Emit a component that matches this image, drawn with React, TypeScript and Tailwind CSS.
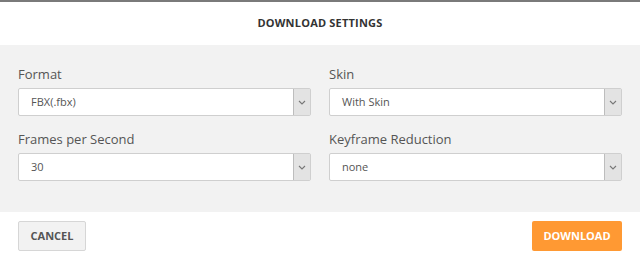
import React from 'react';

const font = { fontFamily: '"Open Sans", "Noto Sans", sans-serif' };

const fields = [
  { label: 'Format', value: 'FBX(.fbx)' },
  { label: 'Skin', value: 'With Skin' },
  { label: 'Frames per Second', value: '30' },
  { label: 'Keyframe Reduction', value: 'none' },
];

function SelectBox({ label, value }: { label: string; value: string }) {
  return (
    <div className="flex flex-col">
      <label className="text-[13px] leading-[18px] text-[#555] mb-[5px]">{label}</label>
      <div className="flex h-[28px] bg-white border border-[#cfcfcf] rounded-[2px]">
        <span className="flex-1 pl-[12px] text-[11px] leading-[26px] text-[#555]">{value}</span>
        <span className="w-[17px] flex items-center justify-center bg-[#e3e3e3] border-l border-[#bdbdbd]">
          <svg width="8" height="5" viewBox="0 0 8 5" fill="none">
            <path d="M1 1l3 3 3-3" stroke="#777" strokeWidth="1.1" />
          </svg>
        </span>
      </div>
    </div>
  );
}

export default function App() {
  return (
    <div className="w-[640px] h-[259px] bg-white flex flex-col" style={font}>
      <div className="h-[2px] bg-[#7a7a7a]" />
      <div className="h-[43px] flex items-center justify-center">
        <h2 className="text-[11px] font-bold tracking-[0.2px] text-[#333]">DOWNLOAD SETTINGS</h2>
      </div>
      <div className="h-[167px] bg-[#f2f2f2] px-[18px] pt-[20px] grid grid-cols-2 gap-x-[18px] gap-y-[14px] content-start">
        {fields.map((f) => (
          <SelectBox key={f.label} label={f.label} value={f.value} />
        ))}
      </div>
      <div className="flex-1 flex items-start justify-between px-[18px] pt-[9px]">
        <button className="w-[68px] h-[30px] bg-[#f2f2f2] border border-[#d6d6d6] rounded-[2px] text-[11px] font-bold text-[#555]">
          CANCEL
        </button>
        <button className="w-[90px] h-[30px] bg-[#ff9933] rounded-[2px] text-[11px] font-bold text-white">
          DOWNLOAD
        </button>
      </div>
    </div>
  );
}
